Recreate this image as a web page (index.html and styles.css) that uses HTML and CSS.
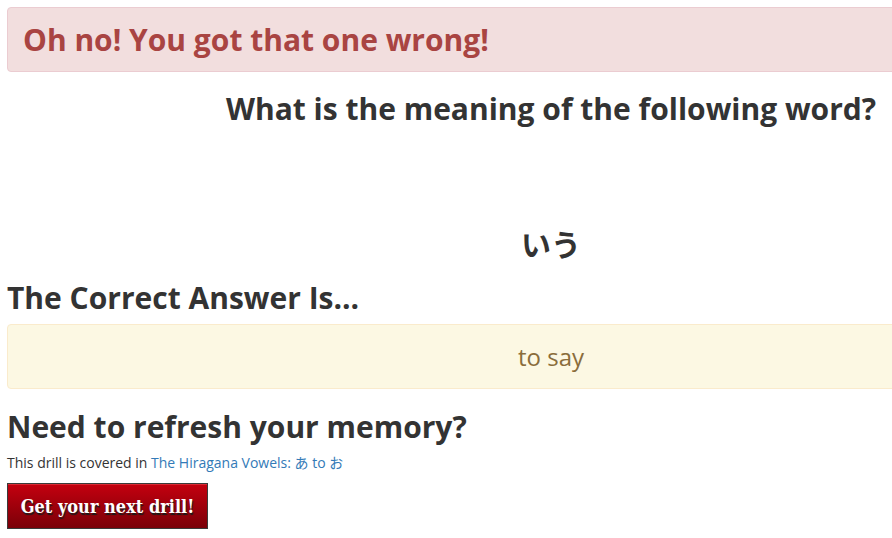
FILE: index.html
```html
<!DOCTYPE html>
<html>
<head>
<meta charset="utf-8">
<link rel="stylesheet" href="styles.css">
</head>
<body>
<div class="page">
  <div class="alert alert-danger">
    <h2 class="alert-title">Oh no! You got that one wrong!</h2>
  </div>
  <h2 class="question">What is the meaning of the following word?</h2>
  <div class="word">いう</div>
  <h2 class="section-title">The Correct Answer Is...</h2>
  <div class="alert alert-warning answer">to say</div>
  <h2 class="section-title refresh">Need to refresh your memory?</h2>
  <p class="covered">This drill is covered in <a href="#" class="lesson-link">The Hiragana Vowels: あ to お</a></p>
  <button class="next-btn">Get your next drill!</button>
</div>
</body>
</html>
```
FILE: styles.css
```css
html, body {
  margin: 0;
  padding: 0;
  overflow: hidden;
  background: #fff;
}
body {
  font-family: "Open Sans", "Noto Sans CJK JP", sans-serif;
  color: #333;
  width: 892px;
  height: 538px;
}
.page {
  width: 1088px;
  margin: 7px 0 0 7px;
}
h2 {
  font-size: 30px;
  line-height: 33px;
  font-weight: 700;
  margin: 0;
  color: #333;
}
.alert {
  border: 1px solid transparent;
  border-radius: 4px;
  padding: 15px;
}
.alert-danger {
  background: #f2dede;
  border-color: #ebccd1;
  color: #a94442;
  margin-bottom: 20px;
}
.alert-title {
  color: #a94442;
}
.question {
  text-align: center;
}
.word {
  text-align: center;
  font-family: "Noto Sans CJK JP", sans-serif;
  font-weight: 700;
  font-size: 30px;
  line-height: 33px;
  margin-top: 102px;
}
.section-title {
  margin-top: 21px;
}
.alert-warning {
  background: #fcf8e3;
  border-color: #faebcc;
  color: #8a6d3b;
}
.answer {
  margin-top: 10px;
  text-align: center;
  font-size: 24px;
  line-height: 33px;
}
.refresh {
  margin-top: 21px;
}
.covered {
  font-size: 14px;
  line-height: 20px;
  margin: 10px 0 0 0;
}
.lesson-link {
  color: #337ab7;
  text-decoration: none;
}
.next-btn {
  display: block;
  margin-top: 10px;
  width: 201px;
  height: 46px;
  border: 1px solid #3a3a3a;
  border-radius: 0;
  background: linear-gradient(#c4000f, #7a0008);
  box-shadow: inset 0 1px 0 rgba(255, 120, 120, 0.35);
  color: #fff;
  font-family: "DejaVu Serif", serif;
  font-stretch: condensed;
  font-weight: 700;
  font-size: 18px;
  text-shadow: 1px 2px 1px #1a1a1a;
  padding: 0;
  cursor: pointer;
}
```
